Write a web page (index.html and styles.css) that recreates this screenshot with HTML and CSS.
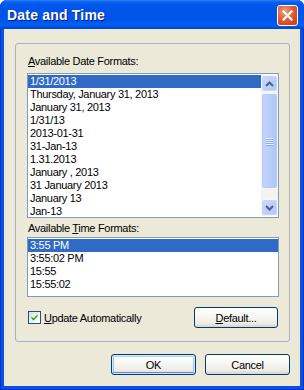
FILE: index.html
```html
<!DOCTYPE html>
<html>
<head>
<meta charset="utf-8">
<title>Date and Time</title>
<link rel="stylesheet" href="styles.css">
</head>
<body>
<div class="window">
  <div class="titlebar">
    <span class="title">Date and Time</span>
    <div class="close" aria-label="Close">
      <svg width="11" height="11" viewBox="0 0 11 11"><path d="M1.5 1.5 L9.5 9.5 M9.5 1.5 L1.5 9.5" stroke="#fff" stroke-width="2.2" stroke-linecap="square" fill="none"/></svg>
    </div>
  </div>
  <div class="client">
    <div class="group">
      <div class="label"><u>A</u>vailable Date Formats:</div>
      <div class="listbox date">
        <ul class="items">
          <li class="sel">1/31/2013</li>
          <li>Thursday, January 31, 2013</li>
          <li>January 31, 2013</li>
          <li>1/31/13</li>
          <li>2013-01-31</li>
          <li>31-Jan-13</li>
          <li>1.31.2013</li>
          <li>January , 2013</li>
          <li>31 January 2013</li>
          <li>January 13</li>
          <li>Jan-13</li>
        </ul>
        <div class="scrollbar">
          <div class="sb-btn"><svg width="9" height="6" viewBox="0 0 9 6"><path d="M1 5 L4.5 1.5 L8 5" stroke="#4D6185" stroke-width="2" fill="none"/></svg></div>
          <div class="sb-track">
            <div class="thumb">
              <span class="grip"></span><span class="grip"></span><span class="grip"></span><span class="grip"></span>
            </div>
          </div>
          <div class="sb-btn"><svg width="9" height="6" viewBox="0 0 9 6"><path d="M1 1 L4.5 4.5 L8 1" stroke="#4D6185" stroke-width="2" fill="none"/></svg></div>
        </div>
      </div>
      <div class="label time-label">Available <u>T</u>ime Formats:</div>
      <div class="listbox time">
        <ul class="items">
          <li class="sel">3:55 PM</li>
          <li>3:55:02 PM</li>
          <li>15:55</li>
          <li>15:55:02</li>
        </ul>
      </div>
      <div class="options">
        <div class="check">
          <span class="box"><svg width="11" height="11" viewBox="0 0 11 11"><path d="M2.5 4.5 L4.5 6.5 L8.5 2.5 L8.5 4.5 L4.5 8.5 L2.5 6.5 Z" fill="#21A121"/></svg></span>
          <span class="check-text"><u>U</u>pdate Automatically</span>
        </div>
        <div class="btn default-btn"><span><u>D</u>efault...</span></div>
      </div>
    </div>
    <div class="actions">
      <div class="btn primary"><span>OK</span></div>
      <div class="btn"><span>Cancel</span></div>
    </div>
  </div>
</div>
</body>
</html>
```
FILE: styles.css
```css
html, body {
  margin: 0;
  padding: 0;
  background: #ffffff;
}
body {
  width: 304px;
  height: 390px;
  overflow: hidden;
  font-family: Tahoma, "Liberation Sans", Arial, sans-serif;
  font-size: 11px;
  letter-spacing: -0.3px;
  color: #000;
}
.window {
  width: 304px;
  height: 390px;
  box-sizing: border-box;
  display: flex;
  flex-direction: column;
  background: #0552E4;
  border-radius: 7px 7px 0 0;
  box-shadow: inset 1px 0 0 #0031C0, inset -1px 0 0 #0031C0, inset 0 -1px 0 #0031C0;
  overflow: hidden;
}
.titlebar {
  height: 29px;
  flex: none;
  display: flex;
  align-items: center;
  justify-content: space-between;
  padding: 0 6px 0 7px;
  background: linear-gradient(to bottom, #2E7EF7 0px, #0A62F2 2px, #0058EE 4px, #0054E6 12px, #0055E8 20px, #0060F8 25px, #0050E0 27px, #0046C6 29px);
}
.title {
  font-family: "Trebuchet MS", "Liberation Sans", Arial, sans-serif;
  font-weight: bold;
  font-size: 14px;
  letter-spacing: 0.2px;
  color: #fff;
  text-shadow: 1px 1px 0 #0A1883;
  padding-top: 1px;
}
.close {
  width: 21px;
  height: 21px;
  box-sizing: border-box;
  border: 1px solid #fff;
  border-radius: 3px;
  background: radial-gradient(circle at 35% 30%, #F3A286 0%, #E36B45 35%, #D6491F 70%, #C23C15 100%);
  display: flex;
  align-items: center;
  justify-content: center;
  margin-top: 1px;
}
.client {
  flex: 1;
  margin: 0 4px 4px 4px;
  background: #ECE9D8;
  display: flex;
  flex-direction: column;
  padding: 14px 10px 0 11px;
}
.group {
  height: 299px;
  box-sizing: border-box;
  border: 1px solid #A6B2C4;
  border-radius: 3px;
  padding: 11px 10px 0 11px;
  display: flex;
  flex-direction: column;
}
.label {
  height: 13px;
  line-height: 13px;
  padding-left: 1px;
  white-space: nowrap;
}
.listbox {
  box-sizing: border-box;
  border: 1px solid #7F9DB9;
  background: #fff;
  padding: 1px 0;
  display: flex;
  overflow: hidden;
}
.listbox.date {
  height: 145px;
  margin-top: 5px;
}
.listbox.time {
  height: 60px;
  margin-top: 2px;
}
.time-label {
  margin-top: 4px;
}
.items {
  list-style: none;
  margin: 0;
  padding: 0;
  flex: 1;
  overflow: hidden;
}
.items li {
  height: 13px;
  line-height: 13px;
  padding-left: 2px;
  white-space: nowrap;
}
.items li.sel {
  background: #316AC5;
  color: #fff;
}
.scrollbar {
  width: 17px;
  flex: none;
  display: flex;
  flex-direction: column;
  background: #F4F3EE;
}
.sb-btn {
  height: 17px;
  box-sizing: border-box;
  border: 1px solid #F4F7FE;
  border-radius: 3px;
  background: linear-gradient(135deg, #CDDBFC 0%, #BACDFA 60%, #B2C6F6 100%);
  box-shadow: inset 0 0 0 1px #C6D6FB;
  display: flex;
  align-items: center;
  justify-content: center;
  flex: none;
}
.sb-track {
  flex: 1;
  padding-top: 1px;
}
.thumb {
  height: 96px;
  box-sizing: border-box;
  border: 1px solid #F4F7FE;
  border-radius: 3px;
  background: linear-gradient(to right, #C3D4FC 0%, #BACEFB 50%, #B0C5F7 100%);
  box-shadow: inset 0 0 0 1px #B5C8F3;
  display: flex;
  flex-direction: column;
  align-items: center;
  justify-content: center;
  gap: 1px;
}
.grip {
  display: block;
  width: 7px;
  height: 1px;
  background: #EEF4FE;
  box-shadow: 0 1px 0 #8CAAE6;
}
.options {
  margin-top: 10px;
  height: 21px;
  display: flex;
  align-items: center;
  justify-content: space-between;
}
.check {
  display: flex;
  align-items: center;
  padding-left: 1px;
}
.box {
  width: 13px;
  height: 13px;
  box-sizing: border-box;
  border: 1px solid #1C5180;
  background: linear-gradient(135deg, #DCDCD7 0%, #F4F4F2 60%, #FFFFFF 100%);
  display: flex;
  align-items: center;
  justify-content: center;
}
.check-text {
  margin-left: 3px;
}
.btn {
  width: 85px;
  height: 21px;
  box-sizing: border-box;
  border: 1px solid #003C74;
  border-radius: 3px;
  background: linear-gradient(to bottom, #FFFFFF 0%, #F7F7F4 40%, #EEEDE6 80%, #D8D4C8 100%);
  display: flex;
  align-items: center;
  justify-content: center;
}
.default-btn {
  width: 84px;
  margin-right: 1px;
}
.primary {
  box-shadow: inset 0 0 0 1px #CEE7FF, inset 0 -2px 0 #6982EE, inset 0 2px 0 #BCD4F6, inset 2px 0 0 #A9C6F3, inset -2px 0 0 #A9C6F3;
}
.actions {
  margin-top: 12px;
  display: flex;
  justify-content: flex-end;
  gap: 9px;
  padding-right: 0;
}
```
